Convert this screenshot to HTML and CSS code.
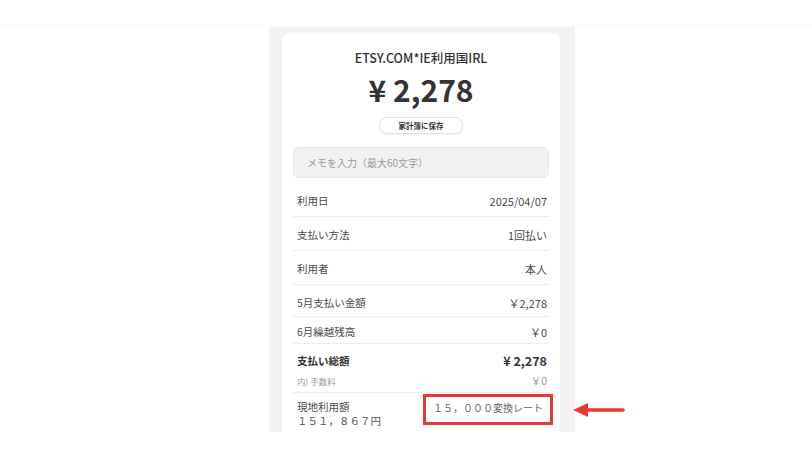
FILE: index.html
```html
<!DOCTYPE html>
<html>
<head>
  <title>ご利用明細</title>
  <link rel="stylesheet" href="styles.css">
</head>
<body>
  <div class="page">
    <div class="stage">
      <div class="panel">
        <div class="card">
          <div class="merchant">ETSY.COM*IE利用国IRL</div>
          <div class="amount">¥ 2,278</div>
          <button class="save-btn">家計簿に保存</button>
          <input class="memo" type="text" placeholder="メモを入力（最大60文字）">

          <div class="row">
            <span class="label">利用日</span>
            <span class="value">2025/04/07</span>
          </div>
          <div class="row">
            <span class="label">支払い方法</span>
            <span class="value">1回払い</span>
          </div>
          <div class="row">
            <span class="label">利用者</span>
            <span class="value">本人</span>
          </div>
          <div class="row row-short">
            <span class="label">5月支払い金額</span>
            <span class="value">￥2,278</span>
          </div>
          <div class="row row-tight">
            <span class="label">6月繰越残高</span>
            <span class="value">￥0</span>
          </div>
          <div class="row row-total">
            <div class="total-line">
              <span class="label">支払い総額</span>
              <span class="value">¥ 2,278</span>
            </div>
            <div class="fee-line">
              <span>内) 手数料</span>
              <span>￥0</span>
            </div>
          </div>
          <div class="row row-local">
            <div class="local-label">
              <div>現地利用額</div>
              <div class="local-amount">１５１，８６７円</div>
            </div>
            <div class="rate-box">１５，０００変換レート</div>
          </div>
        </div>
      </div>

      <svg class="arrow" width="52" height="16" viewBox="0 0 52 16">
        <path d="M12 8 H50" stroke="#e53935" stroke-width="3.5" stroke-linecap="round"/>
        <polygon points="0,8 15,1 15,15" fill="#e53935"/>
      </svg>
    </div>
  </div>
</body>
</html>
```

FILE: styles.css
```css
body {
  margin: 0;
  background-color: #fff;
  font-family: "Noto Sans CJK JP", "Noto Sans", sans-serif;
  color: #444;
}

.page {
  margin-top: 25px;
  border-top: 1px solid #f8f8f8;
  padding-top: 1px;
}

.stage {
  position: relative;
  margin-left: 269px;
  width: 306px;
}

.panel {
  width: 306px;
  height: 405px;
  box-sizing: border-box;
  padding: 6px 15px 0 13px;
  background-color: #f2f2f2;
  overflow: hidden;
}

.card {
  display: flex;
  flex-direction: column;
  height: 100%;
  padding: 16px 11px 0;
  background-color: #fff;
  border-radius: 8px 8px 0 0;
}

.merchant {
  text-align: center;
  font-size: 12.5px;
  line-height: 18px;
  font-weight: 500;
  color: #333;
}

.amount {
  margin-top: 4px;
  text-align: center;
  font-size: 30px;
  line-height: 36px;
  font-weight: bold;
  color: #333;
}

.save-btn {
  align-self: center;
  width: 84px;
  height: 17px;
  margin-top: 10px;
  padding: 0;
  background-color: #fff;
  border: 1px solid #e2e2e2;
  border-radius: 8px;
  box-shadow: 0 1px 2px rgba(0, 0, 0, 0.06);
  font-family: inherit;
  font-size: 7.5px;
  font-weight: bold;
  color: #333;
}

.memo {
  height: 31px;
  margin: 13px 0 5px;
  padding: 0 13px;
  box-sizing: border-box;
  background-color: #f1f1f1;
  border: 1px solid #e8e8e8;
  border-radius: 6px;
  font-family: inherit;
  font-size: 10px;
  outline: none;
}

.memo::placeholder {
  color: #9a9a9a;
}

.row {
  display: flex;
  justify-content: space-between;
  align-items: center;
  padding: 10px 2px 7px 4px;
  border-bottom: 1px solid #ededed;
  line-height: 16px;
}

.row-short {
  padding-bottom: 5px;
}

.row-tight {
  padding-top: 7px;
  padding-bottom: 3px;
}

.label {
  font-size: 10.5px;
  color: #4a4a4a;
}

.value {
  font-size: 11px;
  color: #4a4a4a;
}

.row-total {
  display: block;
  padding-top: 9px;
  padding-bottom: 5px;
}

.total-line,
.fee-line {
  display: flex;
  justify-content: space-between;
  align-items: center;
}

.total-line .label {
  font-weight: bold;
  color: #333;
}

.total-line .value {
  font-size: 12.5px;
  font-weight: bold;
  color: #333;
}

.fee-line {
  margin-top: 6px;
  line-height: 12px;
  font-size: 8.5px;
  color: #999;
}

.fee-line span:last-child {
  font-size: 10.5px;
}

.row-local {
  align-items: flex-start;
  padding-top: 1px;
  border-bottom: none;
  line-height: 14px;
}

.local-label {
  padding-top: 6px;
  font-size: 10.5px;
  color: #4a4a4a;
}

.local-amount {
  color: #555;
}

.rate-box {
  margin-right: -6px;
  padding: 4px 7px 7px;
  border: 3px solid #e53935;
  font-size: 10px;
  color: #666;
}

.arrow {
  position: absolute;
  left: 304px;
  top: 375px;
}
```
